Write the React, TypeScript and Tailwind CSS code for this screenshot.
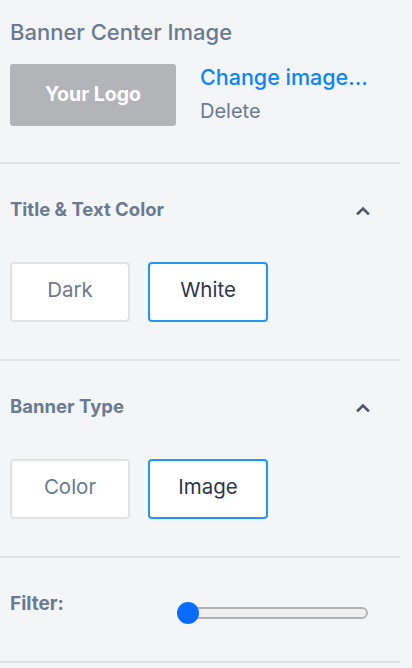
import React from "react";

const font = { fontFamily: "Inter, 'Noto Sans', sans-serif" };

function Chevron() {
  return (
    <svg width="14" height="9" viewBox="0 0 14 9" className="mr-[30px]">
      <path d="M2 7.5 L7 2.5 L12 7.5" fill="none" stroke="#4a5568" strokeWidth="2.6" strokeLinecap="square" />
    </svg>
  );
}

function Toggle({ a, b }: { a: string; b: string }) {
  return (
    <div className="flex gap-[18px] pl-[10px]">
      <div className="w-[120px] h-[60px] pb-[3px] flex items-center justify-center bg-white border-2 border-[#e1e2e5] rounded-[4px] text-[20.5px] text-[#6b7a90]">
        {a}
      </div>
      <div className="w-[120px] h-[60px] pb-[3px] flex items-center justify-center bg-white border-2 border-[#2196f3] rounded-[4px] text-[20.5px] text-[#2d3748]">
        {b}
      </div>
    </div>
  );
}

function Section({ title, a, b }: { title: string; a: string; b: string }) {
  return (
    <div className="w-[400px] border-b-2 border-[#e1e2e6] pt-[34px] pb-[37px]">
      <div className="flex items-center justify-between h-[24px] pl-[10px]">
        <span className="text-[18.5px] font-bold text-[#6b7a90]">{title}</span>
        <Chevron />
      </div>
      <div className="mt-[40px]">
        <Toggle a={a} b={b} />
      </div>
    </div>
  );
}

export default function App() {
  return (
    <div className="w-[412px] h-[668px] bg-[#f4f5f7] overflow-hidden" style={font}>
      <div className="w-[400px] border-b-2 border-[#e1e2e6] pt-[20px] pb-[36px] pl-[10px]">
        <div className="h-[24px] flex items-center text-[22px] font-medium text-[#6b7a90]">Banner Center Image</div>
        <div className="mt-[20px] flex">
          <div className="w-[166px] h-[62px] bg-[#b3b4b7] rounded-[3px] flex items-center justify-center text-[19.5px] font-bold text-white">
            Your Logo
          </div>
          <div className="ml-[24px] flex flex-col">
            <div className="h-[24px] mt-[1px] flex items-center text-[21.5px] font-medium text-[#0a84ff]">Change image...</div>
            <div className="h-[24px] mt-[10px] flex items-center text-[20px] text-[#6b7a90]">Delete</div>
          </div>
        </div>
      </div>
      <Section title="Title & Text Color" a="Dark" b="White" />
      <Section title="Banner Type" a="Color" b="Image" />
      <div className="w-[400px] border-b-2 border-[#e1e2e6] pt-[34px] pb-[37px] pl-[10px] flex items-start">
        <span className="w-[167px] h-[24px] flex items-center text-[19px] font-bold text-[#6b7a90]">Filter:</span>
        <div className="mt-[10px] relative w-[191px] h-[22px] flex items-center">
          <div className="w-full h-[12px] rounded-full bg-[#efefef] border-2 border-[#b3b3b3]" />
          <div className="absolute left-0 top-0 w-[22px] h-[22px] rounded-full bg-[#0a6cff]" />
        </div>
      </div>
    </div>
  );
}
